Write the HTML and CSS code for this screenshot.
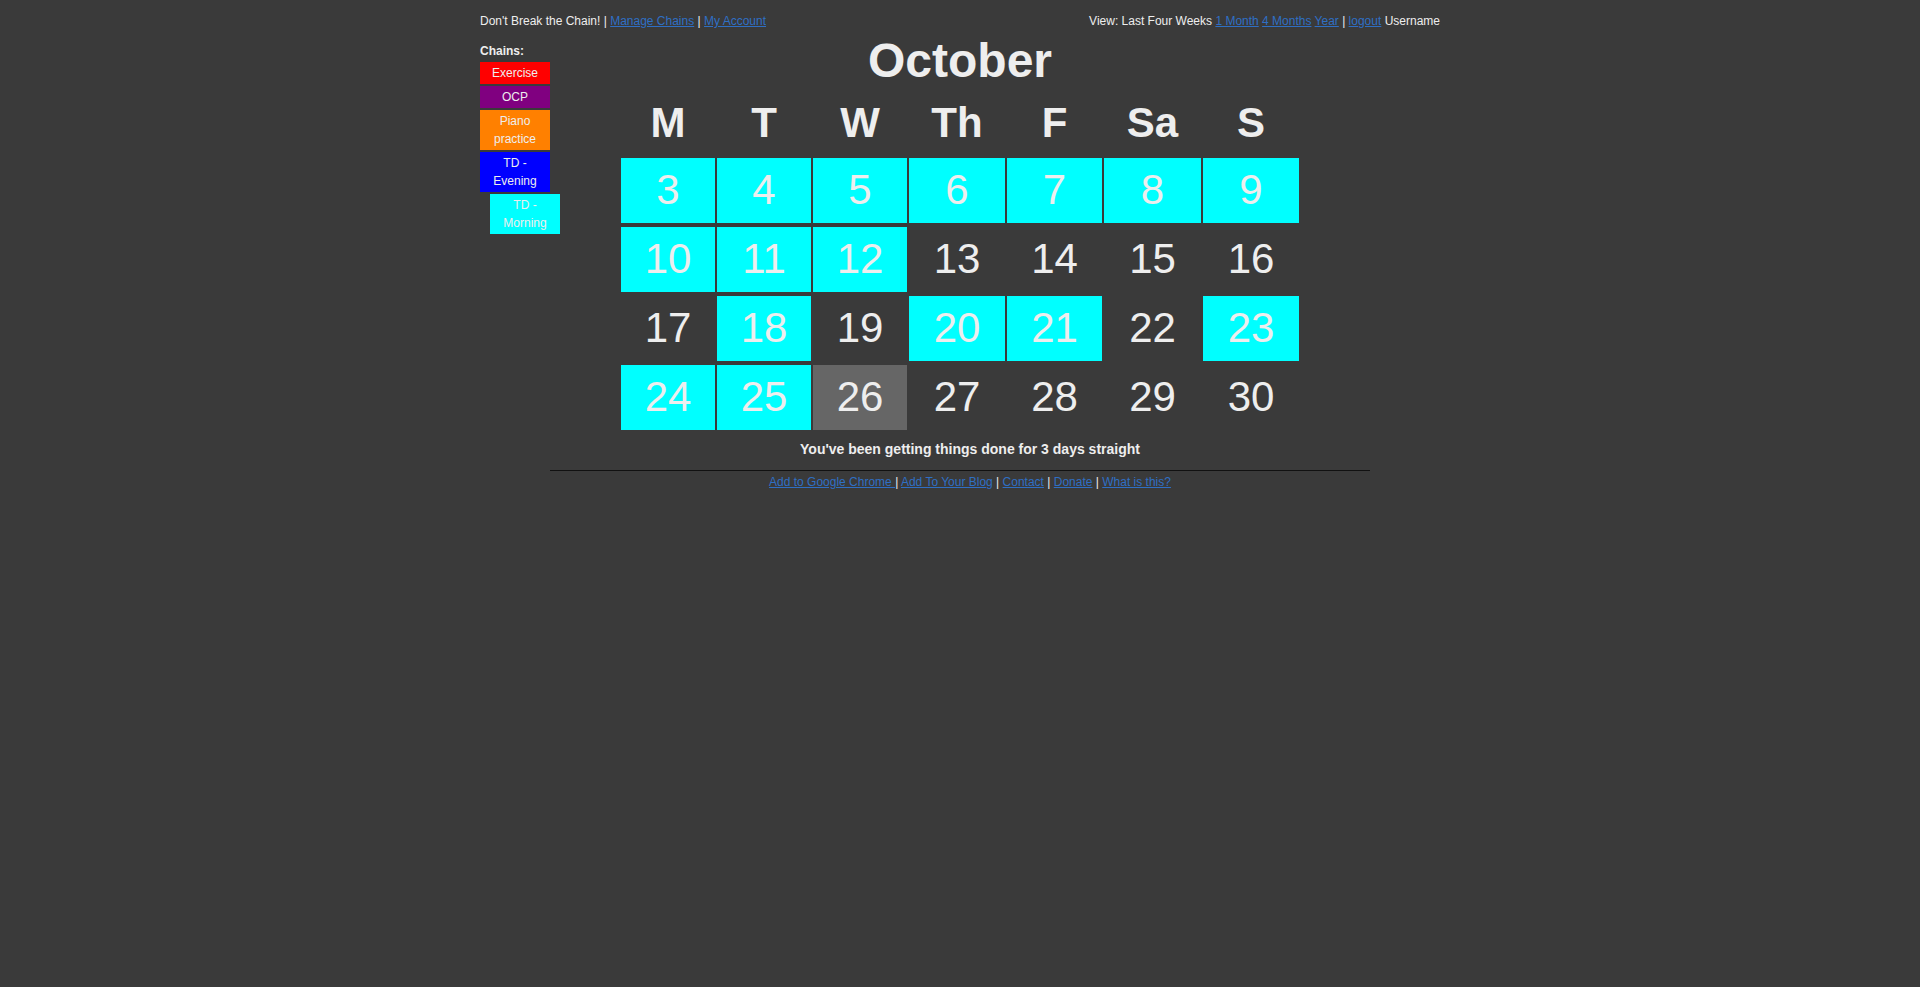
FILE: index.html
```html
<!DOCTYPE html>
<html>
<head>
<meta charset="utf-8">
<title>Don't Break the Chain!</title>
<link rel="stylesheet" href="styles.css">
</head>
<body>
<div class="page">
  <div class="topbar">
    <div class="top-left">Don't Break the Chain! | <a href="#">Manage Chains</a> | <a href="#">My Account</a></div>
    <div class="top-right">View: Last Four Weeks <a href="#">1 Month</a> <a href="#">4 Months</a> <a href="#">Year</a> | <a href="#">logout</a> Username</div>
  </div>
  <div class="layout">
    <div class="sidebar">
      <div class="chains-label">Chains:</div>
      <div class="chain chain-red">Exercise</div>
      <div class="chain chain-purple">OCP</div>
      <div class="chain chain-orange">Piano practice</div>
      <div class="chain chain-blue">TD - Evening</div>
      <div class="chain chain-cyan chain-selected">TD - Morning</div>
    </div>
    <div class="main">
      <h1 class="month">October</h1>
      <table class="cal">
        <colgroup>
          <col class="c1"><col class="c2"><col class="c3"><col class="c4"><col class="c5"><col class="c6"><col class="c7">
        </colgroup>
        <thead>
          <tr><th>M</th><th>T</th><th>W</th><th>Th</th><th>F</th><th>Sa</th><th>S</th></tr>
        </thead>
        <tbody>
          <tr><td class="done">3</td><td class="done">4</td><td class="done">5</td><td class="done">6</td><td class="done">7</td><td class="done">8</td><td class="done">9</td></tr>
          <tr><td class="done">10</td><td class="done">11</td><td class="done">12</td><td>13</td><td>14</td><td>15</td><td>16</td></tr>
          <tr><td>17</td><td class="done">18</td><td>19</td><td class="done">20</td><td class="done">21</td><td>22</td><td class="done">23</td></tr>
          <tr><td class="done">24</td><td class="done">25</td><td class="today">26</td><td>27</td><td>28</td><td>29</td><td>30</td></tr>
        </tbody>
      </table>
      <p class="streak">You've been getting things done for 3 days straight</p>
    </div>
    <div class="spacer"></div>
  </div>
  <div class="footer">
    <hr class="rule">
    <div class="footer-links"><a href="#">Add to Google Chrome </a> | <a href="#">Add To Your Blog</a> | <a href="#">Contact</a> | <a href="#">Donate</a> | <a href="#">What is this?</a></div>
  </div>
</div>
</body>
</html>
```

FILE: styles.css
```css
html, body {
  margin: 0;
  padding: 0;
  background: #3a3a3a;
}

body {
  font-family: "Liberation Sans", Arial, sans-serif;
  color: #eeeeee;
  font-size: 12px;
  min-height: 987px;
}

a {
  color: #2f6fc4;
  text-decoration: underline;
}

.page {
  width: 960px;
  margin: 0 auto;
  padding-top: 14px;
}

.topbar {
  display: flex;
  justify-content: space-between;
  line-height: 14px;
  height: 14px;
}

.layout {
  display: grid;
  grid-template-columns: 80px 1fr 80px;
  margin-top: 5px;
}

.sidebar {
  padding-top: 11px;
}

.chains-label {
  font-weight: bold;
  line-height: 14px;
  margin-bottom: 4px;
}

.chain {
  width: 62px;
  padding: 2px 4px;
  line-height: 18px;
  text-align: center;
  color: #eeeeee;
  margin-bottom: 2px;
}

.chain-red { background: #ff0000; }
.chain-purple { background: #800080; }
.chain-orange { background: #ff8000; }
.chain-blue { background: #0000ff; }
.chain-cyan { background: #00ffff; }

.chain-selected {
  margin-left: 10px;
}

.main {
  display: flex;
  flex-direction: column;
  align-items: center;
}

.month {
  margin: 0;
  font-size: 48px;
  line-height: 56px;
  font-weight: bold;
  color: #eeeeee;
}

.cal {
  border-collapse: separate;
  border-spacing: 2px 4px;
  table-layout: fixed;
  width: 682px;
}

.c1, .c2, .c3 { width: 94px; }
.c4 { width: 96px; }
.c5 { width: 95px; }
.c6 { width: 97px; }
.c7 { width: 96px; }

.cal th {
  height: 61px;
  padding: 0 0 2px 0;
  box-sizing: border-box;
  font-size: 42px;
  line-height: 48px;
  font-weight: bold;
  text-align: center;
  vertical-align: middle;
  color: #eeeeee;
}

.cal td {
  height: 65px;
  padding: 0 0 1px 0;
  box-sizing: border-box;
  font-size: 42px;
  line-height: 48px;
  text-align: center;
  vertical-align: middle;
  color: #eeeeee;
}

.cal td.done {
  background: #00ffff;
}

.cal td.today {
  background: #666666;
}

.streak {
  margin: 7px 0 0 0;
  padding-left: 20px;
  font-size: 14px;
  line-height: 16px;
  font-weight: bold;
}

.footer {
  margin: 0 70px;
}

.rule {
  margin: 13px 0 0 0;
  border: 0;
  border-top: 1px solid #111111;
  height: 0;
}

.footer-links {
  margin-top: 4px;
  padding-left: 20px;
  line-height: 14px;
  text-align: center;
}
```
